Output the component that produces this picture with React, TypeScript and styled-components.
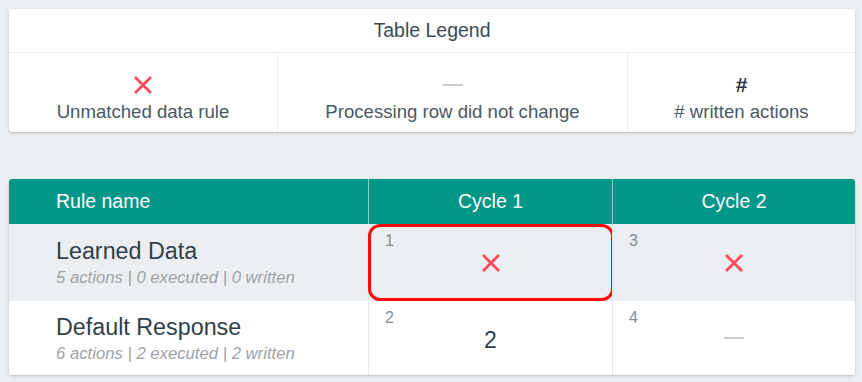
import React from "react";
import styled, { createGlobalStyle } from "styled-components";

const GlobalStyle = createGlobalStyle`
  html, body {
    margin: 0;
    padding: 0;
    background: #eceff1;
  }
  body {
    font-family: "Liberation Sans", Arial, sans-serif;
    color: #37474f;
  }
`;

const Page = styled.main`
  display: flex;
  flex-direction: column;
  gap: 47px;
  width: 846px;
  padding: 9px 7px 7px 9px;
`;

const Card = styled.section`
  background: #fff;
  border-radius: 3px;
  overflow: hidden;
  box-shadow: 0 1px 3px rgba(0, 0, 0, 0.22);
`;

const LegendTitle = styled.header`
  height: 43px;
  display: flex;
  align-items: center;
  justify-content: center;
  font-size: 19.5px;
  color: #3c4a54;
  border-bottom: 1px solid #eef1f3;
`;

const LegendGrid = styled.div`
  display: grid;
  grid-template-columns: 268fr 350fr 228fr;
`;

const LegendItem = styled.div`
  display: flex;
  flex-direction: column;
  align-items: center;
  padding: 22px 0 9px;
  & + & {
    border-left: 1px solid #eef1f3;
  }
`;

const IconSlot = styled.div`
  height: 20px;
  display: flex;
  align-items: center;
  justify-content: center;
  margin-bottom: 6px;
`;

const LegendLabel = styled.div`
  font-size: 18.6px;
  line-height: 22px;
  color: #4a5863;
`;

const Hash = styled.span`
  font-size: 21px;
  font-weight: 700;
  color: #2c3a47;
  line-height: 20px;
`;

const Dash = styled.span`
  display: block;
  width: 20px;
  height: 2.5px;
  background: #c9cccf;
`;

const Table = styled.div`
  display: grid;
  grid-template-columns: 359fr 244fr 243fr;
`;

const HeadCell = styled.div<{ $left?: boolean }>`
  height: 45px;
  background: #009688;
  color: #fff;
  font-size: 19.5px;
  display: flex;
  align-items: center;
  justify-content: ${({ $left }) => ($left ? "flex-start" : "center")};
  padding-left: ${({ $left }) => ($left ? "47px" : "0")};
  & + & {
    border-left: 1px solid rgba(255, 255, 255, 0.55);
  }
`;

const NameCell = styled.div<{ $shade: boolean; $height: number }>`
  height: ${({ $height }) => $height}px;
  background: ${({ $shade }) => ($shade ? "#eceff1" : "#fff")};
  display: flex;
  flex-direction: column;
  justify-content: center;
  padding: 0 0 0 47px;
  box-sizing: border-box;
`;

const RuleTitle = styled.div`
  font-size: 23.3px;
  line-height: 28px;
  color: #2f3e4a;
`;

const RuleMeta = styled.div`
  font-size: 16.7px;
  line-height: 20px;
  font-style: italic;
  color: #9ea3a7;
  margin-top: 3px;
`;

const CycleCell = styled.div<{ $shade: boolean; $height: number }>`
  position: relative;
  height: ${({ $height }) => $height}px;
  background: ${({ $shade }) => ($shade ? "#eceff1" : "#fff")};
  border-left: 1px solid #e3e8eb;
  display: flex;
  align-items: center;
  justify-content: center;
`;

const Index = styled.span`
  position: absolute;
  top: 7px;
  left: 16px;
  font-size: 16px;
  line-height: 19px;
  color: #7f8f99;
`;

const Count = styled.span`
  font-size: 23px;
  color: #2f3e4a;
  margin-top: 4px;
`;

const Highlight = styled.div`
  position: absolute;
  inset: 0 -2px 0 -1px;
  border: 3px solid #ff0a0a;
  border-radius: 12px;
  pointer-events: none;
`;

const Cross = () => (
  <svg width="20" height="20" viewBox="0 0 20 20">
    <path d="M2 2 L18 18 M18 2 L2 18" stroke="#ff4a57" strokeWidth="2.8" />
  </svg>
);

type Mark = { kind: "x" } | { kind: "dash" } | { kind: "count"; value: number };

type Row = {
  name: string;
  meta: string;
  height: number;
  cycles: { index: number; mark: Mark; highlight?: boolean }[];
};

const rows: Row[] = [
  {
    name: "Learned Data",
    meta: "5 actions | 0 executed | 0 written",
    height: 77,
    cycles: [
      { index: 1, mark: { kind: "x" }, highlight: true },
      { index: 3, mark: { kind: "x" } },
    ],
  },
  {
    name: "Default Response",
    meta: "6 actions | 2 executed | 2 written",
    height: 74,
    cycles: [
      { index: 2, mark: { kind: "count", value: 2 } },
      { index: 4, mark: { kind: "dash" } },
    ],
  },
];

function renderMark(mark: Mark) {
  if (mark.kind === "x") return <Cross />;
  if (mark.kind === "dash") return <Dash />;
  return <Count>{mark.value}</Count>;
}

export default function App() {
  return (
    <>
      <GlobalStyle />
      <Page>
        <Card>
          <LegendTitle>Table Legend</LegendTitle>
          <LegendGrid>
            <LegendItem>
              <IconSlot>
                <Cross />
              </IconSlot>
              <LegendLabel>Unmatched data rule</LegendLabel>
            </LegendItem>
            <LegendItem>
              <IconSlot>
                <Dash />
              </IconSlot>
              <LegendLabel>Processing row did not change</LegendLabel>
            </LegendItem>
            <LegendItem>
              <IconSlot>
                <Hash>#</Hash>
              </IconSlot>
              <LegendLabel># written actions</LegendLabel>
            </LegendItem>
          </LegendGrid>
        </Card>

        <Card>
          <Table>
            <HeadCell $left>Rule name</HeadCell>
            <HeadCell>Cycle 1</HeadCell>
            <HeadCell>Cycle 2</HeadCell>
            {rows.map((row, i) => (
              <React.Fragment key={row.name}>
                <NameCell $shade={i === 0} $height={row.height}>
                  <RuleTitle>{row.name}</RuleTitle>
                  <RuleMeta>{row.meta}</RuleMeta>
                </NameCell>
                {row.cycles.map((c) => (
                  <CycleCell key={c.index} $shade={i === 0} $height={row.height}>
                    <Index>{c.index}</Index>
                    {renderMark(c.mark)}
                    {c.highlight && <Highlight />}
                  </CycleCell>
                ))}
              </React.Fragment>
            ))}
          </Table>
        </Card>
      </Page>
    </>
  );
}
